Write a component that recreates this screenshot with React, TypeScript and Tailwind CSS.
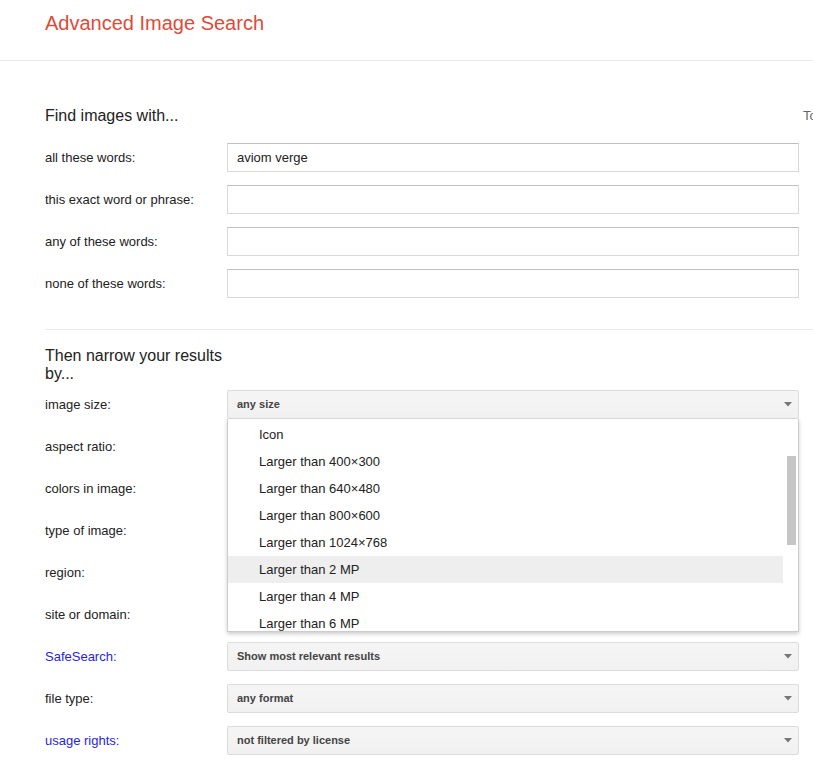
import React from "react";

const font = { fontFamily: '"Liberation Sans", Arial, sans-serif' };

const textRows = [
  { label: "all these words:", value: "aviom verge" },
  { label: "this exact word or phrase:", value: "" },
  { label: "any of these words:", value: "" },
  { label: "none of these words:", value: "" },
];

// rows under the open menu keep their boxes but show no text
const narrowRows = [
  { label: "image size:", value: "any size" },
  { label: "aspect ratio:", value: "" },
  { label: "colors in image:", value: "" },
  { label: "type of image:", value: "" },
  { label: "region:", value: "" },
  { label: "site or domain:", value: "", input: true },
  { label: "SafeSearch:", value: "Show most relevant results", link: true },
  { label: "file type:", value: "any format" },
  { label: "usage rights:", value: "not filtered by license", link: true },
];

const sizeOptions = [
  "Icon",
  "Larger than 400×300",
  "Larger than 640×480",
  "Larger than 800×600",
  "Larger than 1024×768",
  "Larger than 2 MP",
  "Larger than 4 MP",
  "Larger than 6 MP",
];

function Arrow() {
  return (
    <svg width="8" height="5" viewBox="0 0 8 5" className="shrink-0">
      <path d="M0 0h8L4 4.5z" fill="#777" />
    </svg>
  );
}

function SelectBox({ value }: { value: string }) {
  return (
    <div className="flex h-[29px] w-[572px] items-center justify-between rounded-[2px] border border-[#dcdcdc] bg-gradient-to-b from-[#f5f5f5] to-[#f1f1f1] pl-[9px] pr-[6px] text-[11px] font-bold text-[#444]">
      <span>{value}</span>
      <Arrow />
    </div>
  );
}

function TextBox({ value }: { value: string }) {
  return (
    <div className="flex h-[29px] w-[572px] items-center border border-[#d9d9d9] border-t-[#c0c0c0] bg-white px-[9px] text-[13px] text-[#222]">
      {value}
    </div>
  );
}

export default function App() {
  return (
    <div className="h-[768px] w-[813px] overflow-hidden bg-white" style={font}>
      {/* header */}
      <div className="h-[61px] border-b border-[#ebebeb] pl-[45px] pt-[11px]">
        <h1 className="text-[20px] leading-[24px] text-[#dd4b39]">Advanced Image Search</h1>
      </div>

      <div className="pl-[45px]">
        {/* find images with */}
        <div className="flex pt-[45px]">
          <div className="w-[758px] shrink-0">
            <div className="h-[20px] text-[16px] leading-[20px] text-[#222]">Find images with...</div>
            <div className="mt-[17px] flex flex-col gap-[13px]">
              {textRows.map((r) => (
                <div key={r.label} className="flex items-center">
                  <div className="w-[182px] text-[13px] text-[#222]">{r.label}</div>
                  <TextBox value={r.value} />
                </div>
              ))}
            </div>
          </div>
          <div className="shrink-0 whitespace-nowrap text-[13px] leading-[20px] text-[#666]">To do this in the search box</div>
        </div>

        <div className="mt-[31px] h-px w-[900px] bg-[#ebebeb]" />

        {/* narrow results */}
        <div className="w-[182px] pt-[17px] text-[16px] leading-[18px] text-[#222]">Then narrow your results by...</div>

        <div className="relative mt-[7px] flex flex-col gap-[13px]">
          {narrowRows.map((r) => (
            <div key={r.label} className="flex items-center">
              <div className={`w-[182px] text-[13px] ${r.link ? "text-[#1f1fdc]" : "text-[#222]"}`}>{r.label}</div>
              {r.input ? <TextBox value={r.value} /> : <SelectBox value={r.value} />}
            </div>
          ))}

          {/* open dropdown for image size */}
          <div className="absolute left-[182px] top-[29px] h-[213px] w-[572px] overflow-hidden border border-[#ccc] border-t-0 bg-white shadow-[0_2px_4px_rgba(0,0,0,0.2)]">
            <div className="pt-[2px]">
              {sizeOptions.map((o) => (
                <div
                  key={o}
                  className={`flex h-[27px] w-[555px] items-center pl-[31px] text-[13px] text-[#222] ${o === "Larger than 2 MP" ? "bg-[#eeeeee]" : ""}`}
                >
                  {o}
                </div>
              ))}
            </div>
            <div className="absolute right-[2px] top-[37px] h-[89px] w-[9px] bg-[#c6c6c6]" />
          </div>
        </div>
      </div>
    </div>
  );
}
